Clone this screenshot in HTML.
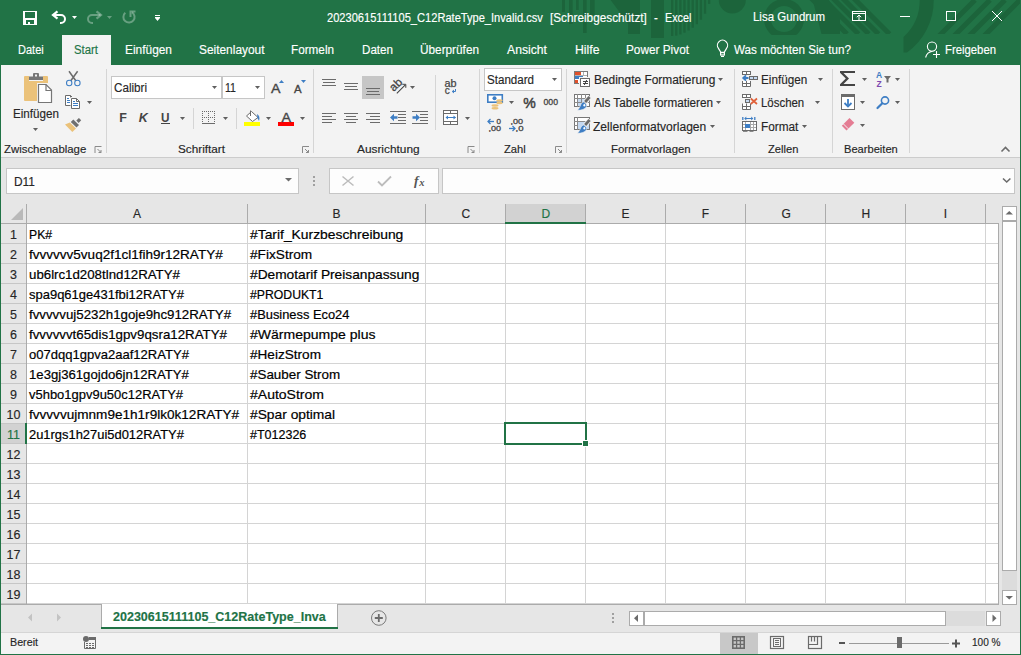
<!DOCTYPE html>
<html><head><meta charset="utf-8"><style>
html,body{margin:0;padding:0;}
body{width:1021px;height:655px;position:relative;overflow:hidden;background:#fff;font-family:"Liberation Sans",sans-serif;}

</style></head><body>
<div style="position:absolute;left:0px;top:0px;width:1021px;height:65px;background:#217346;"></div>
<svg style="position:absolute;left:0;top:0" width="1021" height="65"><g fill="#1c643b"><rect x="562" y="0" width="3" height="12"/><rect x="569" y="0" width="3.6" height="24"/><rect x="576" y="0" width="2.7" height="10"/><rect x="583" y="0" width="3.6" height="33"/><rect x="590" y="0" width="4.6" height="15"/><rect x="651" y="0" width="13" height="38"/><rect x="671.00" y="0" width="2.3" height="36.0"/><rect x="675.11" y="0" width="2.3" height="35.6"/><rect x="679.22" y="0" width="2.3" height="34.4"/><rect x="683.33" y="0" width="2.3" height="32.7"/><rect x="687.44" y="0" width="2.3" height="30.5"/><rect x="691.55" y="0" width="2.3" height="27.7"/><rect x="695.66" y="0" width="2.3" height="24.2"/><rect x="699.77" y="0" width="2.3" height="19.7"/><rect x="703.88" y="0" width="2.3" height="13.7"/><rect x="707.99" y="0" width="2.3" height="3.9"/><path d="M610.6 0 H640 V34 H628 V23.5 Z"/><path d="M718.8 0 A13.5 13.5 0 0 0 745.8 0 Z"/><clipPath id="rc"><rect x="740" y="0" width="80" height="35"/></clipPath><g clip-path="url(#rc)"><path fill-rule="evenodd" d="M764 19 A20 20 0 1 0 804 19 A20 20 0 1 0 764 19 Z M771 19 A13 13 0 1 0 797 19 A13 13 0 1 0 771 19 Z"/></g></g><path d="M812.7 0 H828.4 L840 14 V34 H821.5 Z" fill="#1c643b"/><clipPath id="tc"><rect x="0" y="0" width="1021" height="34"/></clipPath><g stroke="#1c643b" stroke-width="5" clip-path="url(#tc)"><path d="M811 -2 L847 34"/><path d="M822.5 -2 L858.5 34"/><path d="M832.7 -2 L868.7 34"/><path d="M842.5 -2 L878.5 34"/><path d="M853.5 -2 L889.5 34"/><path d="M975 0 L933 42"/><path d="M990 0 L948 42"/><path d="M1005 0 L963 42"/><path d="M1020 0 L978 42"/></g><path d="M919.7 0 H933.7 A63.7 63.7 0 0 1 907 52.5 H903.5 V37 A49.7 49.7 0 0 0 919.7 0 Z" fill="#1c643b"/></svg>
<div style="position:absolute;left:62px;top:35px;width:49px;height:30px;background:#f3f3f3;"></div>
<div style="position:absolute;left:327px;top:11.84px;font-family:'Liberation Sans',sans-serif;font-size:12px;line-height:12px;font-weight:400;color:#fff;white-space:pre;transform:scaleX(0.9241);transform-origin:0 0;-webkit-text-stroke:0.15px currentColor;">20230615111105_C12RateType_Invalid.csv</div>
<div style="position:absolute;left:549.9px;top:11.84px;font-family:'Liberation Sans',sans-serif;font-size:12px;line-height:12px;font-weight:400;color:#fff;white-space:pre;transform:scaleX(0.9806);transform-origin:0 0;-webkit-text-stroke:0.15px currentColor;">[Schreibgeschützt]</div>
<div style="position:absolute;left:654px;top:11.84px;font-family:'Liberation Sans',sans-serif;font-size:12px;line-height:12px;font-weight:400;color:#fff;white-space:pre;transform:scaleX(0.9500);transform-origin:0 0;-webkit-text-stroke:0.15px currentColor;">-</div>
<div style="position:absolute;left:664.6px;top:11.84px;font-family:'Liberation Sans',sans-serif;font-size:12px;line-height:12px;font-weight:400;color:#fff;white-space:pre;transform:scaleX(0.8997);transform-origin:0 0;-webkit-text-stroke:0.15px currentColor;">Excel</div>
<div style="position:absolute;left:753px;top:10.84px;font-family:'Liberation Sans',sans-serif;font-size:12px;line-height:12px;font-weight:400;color:#fff;white-space:pre;transform:scaleX(0.9552);transform-origin:0 0;-webkit-text-stroke:0.15px currentColor;">Lisa Gundrum</div>
<div style="position:absolute;left:17.8px;top:44.42px;font-family:'Liberation Sans',sans-serif;font-size:12.5px;line-height:12.5px;font-weight:400;color:#fff;white-space:pre;transform:scaleX(0.8805);transform-origin:0 0;-webkit-text-stroke:0.15px currentColor;">Datei</div>
<div style="position:absolute;left:125px;top:44.42px;font-family:'Liberation Sans',sans-serif;font-size:12.5px;line-height:12.5px;font-weight:400;color:#fff;white-space:pre;transform:scaleX(0.9522);transform-origin:0 0;-webkit-text-stroke:0.15px currentColor;">Einfügen</div>
<div style="position:absolute;left:198.5px;top:44.42px;font-family:'Liberation Sans',sans-serif;font-size:12.5px;line-height:12.5px;font-weight:400;color:#fff;white-space:pre;transform:scaleX(0.9519);transform-origin:0 0;-webkit-text-stroke:0.15px currentColor;">Seitenlayout</div>
<div style="position:absolute;left:291px;top:44.42px;font-family:'Liberation Sans',sans-serif;font-size:12.5px;line-height:12.5px;font-weight:400;color:#fff;white-space:pre;transform:scaleX(0.9380);transform-origin:0 0;-webkit-text-stroke:0.15px currentColor;">Formeln</div>
<div style="position:absolute;left:362px;top:44.42px;font-family:'Liberation Sans',sans-serif;font-size:12.5px;line-height:12.5px;font-weight:400;color:#fff;white-space:pre;transform:scaleX(0.9293);transform-origin:0 0;-webkit-text-stroke:0.15px currentColor;">Daten</div>
<div style="position:absolute;left:420px;top:44.42px;font-family:'Liberation Sans',sans-serif;font-size:12.5px;line-height:12.5px;font-weight:400;color:#fff;white-space:pre;transform:scaleX(0.9433);transform-origin:0 0;-webkit-text-stroke:0.15px currentColor;">Überprüfen</div>
<div style="position:absolute;left:507px;top:44.42px;font-family:'Liberation Sans',sans-serif;font-size:12.5px;line-height:12.5px;font-weight:400;color:#fff;white-space:pre;transform:scaleX(0.9756);transform-origin:0 0;-webkit-text-stroke:0.15px currentColor;">Ansicht</div>
<div style="position:absolute;left:574.5px;top:44.42px;font-family:'Liberation Sans',sans-serif;font-size:12.5px;line-height:12.5px;font-weight:400;color:#fff;white-space:pre;transform:scaleX(0.9794);transform-origin:0 0;-webkit-text-stroke:0.15px currentColor;">Hilfe</div>
<div style="position:absolute;left:626px;top:44.42px;font-family:'Liberation Sans',sans-serif;font-size:12.5px;line-height:12.5px;font-weight:400;color:#fff;white-space:pre;transform:scaleX(0.9445);transform-origin:0 0;-webkit-text-stroke:0.15px currentColor;">Power Pivot</div>
<div style="position:absolute;left:734px;top:44.42px;font-family:'Liberation Sans',sans-serif;font-size:12.5px;line-height:12.5px;font-weight:400;color:#fff;white-space:pre;transform:scaleX(0.9338);transform-origin:0 0;-webkit-text-stroke:0.15px currentColor;">Was möchten Sie tun?</div>
<div style="position:absolute;left:944.6px;top:44.42px;font-family:'Liberation Sans',sans-serif;font-size:12.5px;line-height:12.5px;font-weight:400;color:#fff;white-space:pre;transform:scaleX(0.9059);transform-origin:0 0;-webkit-text-stroke:0.15px currentColor;">Freigeben</div>
<div style="position:absolute;left:74px;top:44.42px;font-family:'Liberation Sans',sans-serif;font-size:12.5px;line-height:12.5px;font-weight:400;color:#217346;white-space:pre;transform:scaleX(0.9089);transform-origin:0 0;-webkit-text-stroke:0.15px currentColor;">Start</div>
<div style="position:absolute;left:0px;top:65px;width:1021px;height:92px;background:#f3f3f3;"></div>
<div style="position:absolute;left:0px;top:157px;width:1021px;height:1px;background:#cccccc;"></div>
<div style="position:absolute;left:106px;top:69px;width:1px;height:84px;background:#d5d5d5;"></div>
<div style="position:absolute;left:313px;top:69px;width:1px;height:84px;background:#d5d5d5;"></div>
<div style="position:absolute;left:479px;top:69px;width:1px;height:84px;background:#d5d5d5;"></div>
<div style="position:absolute;left:566px;top:69px;width:1px;height:84px;background:#d5d5d5;"></div>
<div style="position:absolute;left:734px;top:69px;width:1px;height:84px;background:#d5d5d5;"></div>
<div style="position:absolute;left:832px;top:69px;width:1px;height:84px;background:#d5d5d5;"></div>
<div style="position:absolute;left:909px;top:69px;width:1px;height:84px;background:#d5d5d5;"></div>
<div style="position:absolute;left:4px;top:143.99px;font-family:'Liberation Sans',sans-serif;font-size:11px;line-height:11px;font-weight:400;color:#262626;white-space:pre;transform:scaleX(1.0352);transform-origin:0 0;-webkit-text-stroke:0.15px currentColor;">Zwischenablage</div>
<div style="position:absolute;left:178px;top:143.99px;font-family:'Liberation Sans',sans-serif;font-size:11px;line-height:11px;font-weight:400;color:#262626;white-space:pre;transform:scaleX(1.0678);transform-origin:0 0;-webkit-text-stroke:0.15px currentColor;">Schriftart</div>
<div style="position:absolute;left:357px;top:143.99px;font-family:'Liberation Sans',sans-serif;font-size:11px;line-height:11px;font-weight:400;color:#262626;white-space:pre;transform:scaleX(1.0776);transform-origin:0 0;-webkit-text-stroke:0.15px currentColor;">Ausrichtung</div>
<div style="position:absolute;left:503.7px;top:143.99px;font-family:'Liberation Sans',sans-serif;font-size:11px;line-height:11px;font-weight:400;color:#262626;white-space:pre;transform:scaleX(1.0184);transform-origin:0 0;-webkit-text-stroke:0.15px currentColor;">Zahl</div>
<div style="position:absolute;left:610.8px;top:143.99px;font-family:'Liberation Sans',sans-serif;font-size:11px;line-height:11px;font-weight:400;color:#262626;white-space:pre;transform:scaleX(1.0344);transform-origin:0 0;-webkit-text-stroke:0.15px currentColor;">Formatvorlagen</div>
<div style="position:absolute;left:768px;top:143.99px;font-family:'Liberation Sans',sans-serif;font-size:11px;line-height:11px;font-weight:400;color:#262626;white-space:pre;transform:scaleX(1.0144);transform-origin:0 0;-webkit-text-stroke:0.15px currentColor;">Zellen</div>
<div style="position:absolute;left:843.7px;top:143.99px;font-family:'Liberation Sans',sans-serif;font-size:11px;line-height:11px;font-weight:400;color:#262626;white-space:pre;transform:scaleX(1.0109);transform-origin:0 0;-webkit-text-stroke:0.15px currentColor;">Bearbeiten</div>
<div style="position:absolute;left:12.5px;top:107.84px;font-family:'Liberation Sans',sans-serif;font-size:12px;line-height:12px;font-weight:400;color:#262626;white-space:pre;transform:scaleX(0.9710);transform-origin:0 0;-webkit-text-stroke:0.15px currentColor;">Einfügen</div>
<div style="position:absolute;left:593.5px;top:74.14px;font-family:'Liberation Sans',sans-serif;font-size:12px;line-height:12px;font-weight:400;color:#262626;white-space:pre;transform:scaleX(0.9936);transform-origin:0 0;-webkit-text-stroke:0.15px currentColor;">Bedingte Formatierung</div>
<div style="position:absolute;left:593.5px;top:97.44px;font-family:'Liberation Sans',sans-serif;font-size:12px;line-height:12px;font-weight:400;color:#262626;white-space:pre;transform:scaleX(0.9767);transform-origin:0 0;-webkit-text-stroke:0.15px currentColor;">Als Tabelle formatieren</div>
<div style="position:absolute;left:593px;top:120.64px;font-family:'Liberation Sans',sans-serif;font-size:12px;line-height:12px;font-weight:400;color:#262626;white-space:pre;transform:scaleX(1.0050);transform-origin:0 0;-webkit-text-stroke:0.15px currentColor;">Zellenformatvorlagen</div>
<div style="position:absolute;left:761.4px;top:74.14px;font-family:'Liberation Sans',sans-serif;font-size:12px;line-height:12px;font-weight:400;color:#262626;white-space:pre;transform:scaleX(0.9752);transform-origin:0 0;-webkit-text-stroke:0.15px currentColor;">Einfügen</div>
<div style="position:absolute;left:761.4px;top:97.44px;font-family:'Liberation Sans',sans-serif;font-size:12px;line-height:12px;font-weight:400;color:#262626;white-space:pre;transform:scaleX(0.9521);transform-origin:0 0;-webkit-text-stroke:0.15px currentColor;">Löschen</div>
<div style="position:absolute;left:761.4px;top:120.64px;font-family:'Liberation Sans',sans-serif;font-size:12px;line-height:12px;font-weight:400;color:#262626;white-space:pre;transform:scaleX(0.9838);transform-origin:0 0;-webkit-text-stroke:0.15px currentColor;">Format</div>
<div style="position:absolute;left:111px;top:76px;width:109px;height:21px;background:#fff;border:1px solid #c6c6c6;"></div>
<div style="position:absolute;left:222px;top:76px;width:41px;height:21px;background:#fff;border:1px solid #c6c6c6;"></div>
<div style="position:absolute;left:114.4px;top:81.84px;font-family:'Liberation Sans',sans-serif;font-size:12px;line-height:12px;font-weight:400;color:#262626;white-space:pre;transform:scaleX(0.9701);transform-origin:0 0;-webkit-text-stroke:0.15px currentColor;">Calibri</div>
<div style="position:absolute;left:225.4px;top:81.84px;font-family:'Liberation Sans',sans-serif;font-size:12px;line-height:12px;font-weight:400;color:#262626;white-space:pre;transform:scaleX(0.8822);transform-origin:0 0;-webkit-text-stroke:0.15px currentColor;">11</div>
<div style="position:absolute;left:484px;top:68px;width:76px;height:21px;background:#fff;border:1px solid #c6c6c6;"></div>
<div style="position:absolute;left:487px;top:73.84px;font-family:'Liberation Sans',sans-serif;font-size:12px;line-height:12px;font-weight:400;color:#262626;white-space:pre;transform:scaleX(0.9650);transform-origin:0 0;-webkit-text-stroke:0.15px currentColor;">Standard</div>
<div style="position:absolute;left:0px;top:158px;width:1021px;height:46px;background:#e6e6e6;"></div>
<div style="position:absolute;left:6px;top:168px;width:291px;height:24px;background:#fdfdfd;border:1px solid #c6c6c6;"></div>
<div style="position:absolute;left:13.5px;top:175.84px;font-family:'Liberation Sans',sans-serif;font-size:12px;line-height:12px;font-weight:400;color:#262626;white-space:pre;transform:scaleX(0.9941);transform-origin:0 0;-webkit-text-stroke:0.15px currentColor;">D11</div>
<div style="position:absolute;left:329px;top:168px;width:108px;height:24px;background:#fdfdfd;border:1px solid #c6c6c6;"></div>
<div style="position:absolute;left:442px;top:168px;width:571px;height:24px;background:#fdfdfd;border:1px solid #c6c6c6;"></div>
<div style="position:absolute;left:0px;top:204px;width:1021px;height:20px;background:#e6e6e6;"></div>
<div style="position:absolute;left:1px;top:224px;width:25px;height:380px;background:#e6e6e6;"></div>
<div style="position:absolute;left:27px;top:224px;width:971px;height:380px;background:#fff;"></div>
<div style="position:absolute;left:247px;top:204px;width:1px;height:19px;background:#ababab;"></div>
<div style="position:absolute;left:247px;top:224px;width:1px;height:380px;background:#d4d4d4;"></div>
<div style="position:absolute;left:425px;top:204px;width:1px;height:19px;background:#ababab;"></div>
<div style="position:absolute;left:425px;top:224px;width:1px;height:380px;background:#d4d4d4;"></div>
<div style="position:absolute;left:505px;top:204px;width:1px;height:19px;background:#ababab;"></div>
<div style="position:absolute;left:505px;top:224px;width:1px;height:380px;background:#d4d4d4;"></div>
<div style="position:absolute;left:585px;top:204px;width:1px;height:19px;background:#ababab;"></div>
<div style="position:absolute;left:585px;top:224px;width:1px;height:380px;background:#d4d4d4;"></div>
<div style="position:absolute;left:665px;top:204px;width:1px;height:19px;background:#ababab;"></div>
<div style="position:absolute;left:665px;top:224px;width:1px;height:380px;background:#d4d4d4;"></div>
<div style="position:absolute;left:745px;top:204px;width:1px;height:19px;background:#ababab;"></div>
<div style="position:absolute;left:745px;top:224px;width:1px;height:380px;background:#d4d4d4;"></div>
<div style="position:absolute;left:825px;top:204px;width:1px;height:19px;background:#ababab;"></div>
<div style="position:absolute;left:825px;top:224px;width:1px;height:380px;background:#d4d4d4;"></div>
<div style="position:absolute;left:905px;top:204px;width:1px;height:19px;background:#ababab;"></div>
<div style="position:absolute;left:905px;top:224px;width:1px;height:380px;background:#d4d4d4;"></div>
<div style="position:absolute;left:985px;top:204px;width:1px;height:19px;background:#ababab;"></div>
<div style="position:absolute;left:985px;top:224px;width:1px;height:380px;background:#d4d4d4;"></div>
<div style="position:absolute;left:26px;top:204px;width:1px;height:400px;background:#ababab;"></div>
<div style="position:absolute;left:1px;top:223px;width:997px;height:1px;background:#ababab;"></div>
<div style="position:absolute;left:27px;top:243px;width:971px;height:1px;background:#d4d4d4;"></div>
<div style="position:absolute;left:1px;top:243px;width:25px;height:1px;background:#c6c6c6;"></div>
<div style="position:absolute;left:27px;top:263px;width:971px;height:1px;background:#d4d4d4;"></div>
<div style="position:absolute;left:1px;top:263px;width:25px;height:1px;background:#c6c6c6;"></div>
<div style="position:absolute;left:27px;top:283px;width:971px;height:1px;background:#d4d4d4;"></div>
<div style="position:absolute;left:1px;top:283px;width:25px;height:1px;background:#c6c6c6;"></div>
<div style="position:absolute;left:27px;top:303px;width:971px;height:1px;background:#d4d4d4;"></div>
<div style="position:absolute;left:1px;top:303px;width:25px;height:1px;background:#c6c6c6;"></div>
<div style="position:absolute;left:27px;top:323px;width:971px;height:1px;background:#d4d4d4;"></div>
<div style="position:absolute;left:1px;top:323px;width:25px;height:1px;background:#c6c6c6;"></div>
<div style="position:absolute;left:27px;top:343px;width:971px;height:1px;background:#d4d4d4;"></div>
<div style="position:absolute;left:1px;top:343px;width:25px;height:1px;background:#c6c6c6;"></div>
<div style="position:absolute;left:27px;top:363px;width:971px;height:1px;background:#d4d4d4;"></div>
<div style="position:absolute;left:1px;top:363px;width:25px;height:1px;background:#c6c6c6;"></div>
<div style="position:absolute;left:27px;top:383px;width:971px;height:1px;background:#d4d4d4;"></div>
<div style="position:absolute;left:1px;top:383px;width:25px;height:1px;background:#c6c6c6;"></div>
<div style="position:absolute;left:27px;top:403px;width:971px;height:1px;background:#d4d4d4;"></div>
<div style="position:absolute;left:1px;top:403px;width:25px;height:1px;background:#c6c6c6;"></div>
<div style="position:absolute;left:27px;top:423px;width:971px;height:1px;background:#d4d4d4;"></div>
<div style="position:absolute;left:1px;top:423px;width:25px;height:1px;background:#c6c6c6;"></div>
<div style="position:absolute;left:27px;top:443px;width:971px;height:1px;background:#d4d4d4;"></div>
<div style="position:absolute;left:1px;top:443px;width:25px;height:1px;background:#c6c6c6;"></div>
<div style="position:absolute;left:27px;top:463px;width:971px;height:1px;background:#d4d4d4;"></div>
<div style="position:absolute;left:1px;top:463px;width:25px;height:1px;background:#c6c6c6;"></div>
<div style="position:absolute;left:27px;top:483px;width:971px;height:1px;background:#d4d4d4;"></div>
<div style="position:absolute;left:1px;top:483px;width:25px;height:1px;background:#c6c6c6;"></div>
<div style="position:absolute;left:27px;top:503px;width:971px;height:1px;background:#d4d4d4;"></div>
<div style="position:absolute;left:1px;top:503px;width:25px;height:1px;background:#c6c6c6;"></div>
<div style="position:absolute;left:27px;top:523px;width:971px;height:1px;background:#d4d4d4;"></div>
<div style="position:absolute;left:1px;top:523px;width:25px;height:1px;background:#c6c6c6;"></div>
<div style="position:absolute;left:27px;top:543px;width:971px;height:1px;background:#d4d4d4;"></div>
<div style="position:absolute;left:1px;top:543px;width:25px;height:1px;background:#c6c6c6;"></div>
<div style="position:absolute;left:27px;top:563px;width:971px;height:1px;background:#d4d4d4;"></div>
<div style="position:absolute;left:1px;top:563px;width:25px;height:1px;background:#c6c6c6;"></div>
<div style="position:absolute;left:27px;top:583px;width:971px;height:1px;background:#d4d4d4;"></div>
<div style="position:absolute;left:1px;top:583px;width:25px;height:1px;background:#c6c6c6;"></div>
<div style="position:absolute;left:27px;top:603px;width:971px;height:1px;background:#d4d4d4;"></div>
<div style="position:absolute;left:1px;top:603px;width:25px;height:1px;background:#c6c6c6;"></div>
<div style="position:absolute;left:998px;top:223px;width:1px;height:382px;background:#ababab;"></div>
<div style="position:absolute;left:1px;top:604px;width:998px;height:1px;background:#ababab;"></div>
<div style="position:absolute;left:506px;top:204px;width:79px;height:18px;background:#d2d2d2;"></div>
<div style="position:absolute;left:505px;top:222px;width:81px;height:2px;background:#217346;"></div>
<div style="position:absolute;left:1px;top:424px;width:24px;height:19px;background:#d2d2d2;"></div>
<div style="position:absolute;left:25px;top:423px;width:2px;height:21px;background:#217346;"></div>
<div style="position:absolute;left:133.0px;top:207.84px;font-family:'Liberation Sans',sans-serif;font-size:12px;line-height:12px;font-weight:400;color:#262626;white-space:pre;width:8px;text-align:center;-webkit-text-stroke:0.15px currentColor;">A</div>
<div style="position:absolute;left:332.5px;top:207.84px;font-family:'Liberation Sans',sans-serif;font-size:12px;line-height:12px;font-weight:400;color:#262626;white-space:pre;width:8px;text-align:center;-webkit-text-stroke:0.15px currentColor;">B</div>
<div style="position:absolute;left:461.5px;top:207.84px;font-family:'Liberation Sans',sans-serif;font-size:12px;line-height:12px;font-weight:400;color:#262626;white-space:pre;width:8px;text-align:center;-webkit-text-stroke:0.15px currentColor;">C</div>
<div style="position:absolute;left:541.5px;top:207.84px;font-family:'Liberation Sans',sans-serif;font-size:12px;line-height:12px;font-weight:400;color:#217346;white-space:pre;width:8px;text-align:center;-webkit-text-stroke:0.15px currentColor;">D</div>
<div style="position:absolute;left:621.5px;top:207.84px;font-family:'Liberation Sans',sans-serif;font-size:12px;line-height:12px;font-weight:400;color:#262626;white-space:pre;width:8px;text-align:center;-webkit-text-stroke:0.15px currentColor;">E</div>
<div style="position:absolute;left:701.5px;top:207.84px;font-family:'Liberation Sans',sans-serif;font-size:12px;line-height:12px;font-weight:400;color:#262626;white-space:pre;width:8px;text-align:center;-webkit-text-stroke:0.15px currentColor;">F</div>
<div style="position:absolute;left:781.5px;top:207.84px;font-family:'Liberation Sans',sans-serif;font-size:12px;line-height:12px;font-weight:400;color:#262626;white-space:pre;width:8px;text-align:center;-webkit-text-stroke:0.15px currentColor;">G</div>
<div style="position:absolute;left:861.5px;top:207.84px;font-family:'Liberation Sans',sans-serif;font-size:12px;line-height:12px;font-weight:400;color:#262626;white-space:pre;width:8px;text-align:center;-webkit-text-stroke:0.15px currentColor;">H</div>
<div style="position:absolute;left:941.5px;top:207.84px;font-family:'Liberation Sans',sans-serif;font-size:12px;line-height:12px;font-weight:400;color:#262626;white-space:pre;width:8px;text-align:center;-webkit-text-stroke:0.15px currentColor;">I</div>
<div style="position:absolute;left:0px;top:229.42px;font-family:'Liberation Sans',sans-serif;font-size:12.5px;line-height:12.5px;font-weight:400;color:#262626;white-space:pre;width:27px;text-align:center;-webkit-text-stroke:0.15px currentColor;">1</div>
<div style="position:absolute;left:0px;top:249.42px;font-family:'Liberation Sans',sans-serif;font-size:12.5px;line-height:12.5px;font-weight:400;color:#262626;white-space:pre;width:27px;text-align:center;-webkit-text-stroke:0.15px currentColor;">2</div>
<div style="position:absolute;left:0px;top:269.42px;font-family:'Liberation Sans',sans-serif;font-size:12.5px;line-height:12.5px;font-weight:400;color:#262626;white-space:pre;width:27px;text-align:center;-webkit-text-stroke:0.15px currentColor;">3</div>
<div style="position:absolute;left:0px;top:289.42px;font-family:'Liberation Sans',sans-serif;font-size:12.5px;line-height:12.5px;font-weight:400;color:#262626;white-space:pre;width:27px;text-align:center;-webkit-text-stroke:0.15px currentColor;">4</div>
<div style="position:absolute;left:0px;top:309.42px;font-family:'Liberation Sans',sans-serif;font-size:12.5px;line-height:12.5px;font-weight:400;color:#262626;white-space:pre;width:27px;text-align:center;-webkit-text-stroke:0.15px currentColor;">5</div>
<div style="position:absolute;left:0px;top:329.42px;font-family:'Liberation Sans',sans-serif;font-size:12.5px;line-height:12.5px;font-weight:400;color:#262626;white-space:pre;width:27px;text-align:center;-webkit-text-stroke:0.15px currentColor;">6</div>
<div style="position:absolute;left:0px;top:349.42px;font-family:'Liberation Sans',sans-serif;font-size:12.5px;line-height:12.5px;font-weight:400;color:#262626;white-space:pre;width:27px;text-align:center;-webkit-text-stroke:0.15px currentColor;">7</div>
<div style="position:absolute;left:0px;top:369.42px;font-family:'Liberation Sans',sans-serif;font-size:12.5px;line-height:12.5px;font-weight:400;color:#262626;white-space:pre;width:27px;text-align:center;-webkit-text-stroke:0.15px currentColor;">8</div>
<div style="position:absolute;left:0px;top:389.42px;font-family:'Liberation Sans',sans-serif;font-size:12.5px;line-height:12.5px;font-weight:400;color:#262626;white-space:pre;width:27px;text-align:center;-webkit-text-stroke:0.15px currentColor;">9</div>
<div style="position:absolute;left:0px;top:409.42px;font-family:'Liberation Sans',sans-serif;font-size:12.5px;line-height:12.5px;font-weight:400;color:#262626;white-space:pre;width:27px;text-align:center;-webkit-text-stroke:0.15px currentColor;">10</div>
<div style="position:absolute;left:0px;top:429.42px;font-family:'Liberation Sans',sans-serif;font-size:12.5px;line-height:12.5px;font-weight:400;color:#217346;white-space:pre;width:27px;text-align:center;-webkit-text-stroke:0.15px currentColor;">11</div>
<div style="position:absolute;left:0px;top:449.42px;font-family:'Liberation Sans',sans-serif;font-size:12.5px;line-height:12.5px;font-weight:400;color:#262626;white-space:pre;width:27px;text-align:center;-webkit-text-stroke:0.15px currentColor;">12</div>
<div style="position:absolute;left:0px;top:469.42px;font-family:'Liberation Sans',sans-serif;font-size:12.5px;line-height:12.5px;font-weight:400;color:#262626;white-space:pre;width:27px;text-align:center;-webkit-text-stroke:0.15px currentColor;">13</div>
<div style="position:absolute;left:0px;top:489.42px;font-family:'Liberation Sans',sans-serif;font-size:12.5px;line-height:12.5px;font-weight:400;color:#262626;white-space:pre;width:27px;text-align:center;-webkit-text-stroke:0.15px currentColor;">14</div>
<div style="position:absolute;left:0px;top:509.42px;font-family:'Liberation Sans',sans-serif;font-size:12.5px;line-height:12.5px;font-weight:400;color:#262626;white-space:pre;width:27px;text-align:center;-webkit-text-stroke:0.15px currentColor;">15</div>
<div style="position:absolute;left:0px;top:529.42px;font-family:'Liberation Sans',sans-serif;font-size:12.5px;line-height:12.5px;font-weight:400;color:#262626;white-space:pre;width:27px;text-align:center;-webkit-text-stroke:0.15px currentColor;">16</div>
<div style="position:absolute;left:0px;top:549.42px;font-family:'Liberation Sans',sans-serif;font-size:12.5px;line-height:12.5px;font-weight:400;color:#262626;white-space:pre;width:27px;text-align:center;-webkit-text-stroke:0.15px currentColor;">17</div>
<div style="position:absolute;left:0px;top:569.42px;font-family:'Liberation Sans',sans-serif;font-size:12.5px;line-height:12.5px;font-weight:400;color:#262626;white-space:pre;width:27px;text-align:center;-webkit-text-stroke:0.15px currentColor;">18</div>
<div style="position:absolute;left:0px;top:589.42px;font-family:'Liberation Sans',sans-serif;font-size:12.5px;line-height:12.5px;font-weight:400;color:#262626;white-space:pre;width:27px;text-align:center;-webkit-text-stroke:0.15px currentColor;">19</div>
<div style="position:absolute;left:29.4px;top:228.00px;font-family:'Liberation Sans',sans-serif;font-size:13px;line-height:13px;font-weight:400;color:#000;white-space:pre;transform:scaleX(0.9399);transform-origin:0 0;-webkit-text-stroke:0.2px #000;">PK#</div>
<div style="position:absolute;left:249.8px;top:228.00px;font-family:'Liberation Sans',sans-serif;font-size:13px;line-height:13px;font-weight:400;color:#000;white-space:pre;transform:scaleX(1.0660);transform-origin:0 0;-webkit-text-stroke:0.2px #000;">#Tarif_Kurzbeschreibung</div>
<div style="position:absolute;left:29.4px;top:248.00px;font-family:'Liberation Sans',sans-serif;font-size:13px;line-height:13px;font-weight:400;color:#000;white-space:pre;transform:scaleX(1.0403);transform-origin:0 0;-webkit-text-stroke:0.2px #000;">fvvvvvv5vuq2f1cl1fih9r12RATY#</div>
<div style="position:absolute;left:249.8px;top:248.00px;font-family:'Liberation Sans',sans-serif;font-size:13px;line-height:13px;font-weight:400;color:#000;white-space:pre;transform:scaleX(1.0501);transform-origin:0 0;-webkit-text-stroke:0.2px #000;">#FixStrom</div>
<div style="position:absolute;left:29.4px;top:268.00px;font-family:'Liberation Sans',sans-serif;font-size:13px;line-height:13px;font-weight:400;color:#000;white-space:pre;transform:scaleX(1.0201);transform-origin:0 0;-webkit-text-stroke:0.2px #000;">ub6lrc1d208tlnd12RATY#</div>
<div style="position:absolute;left:249.8px;top:268.00px;font-family:'Liberation Sans',sans-serif;font-size:13px;line-height:13px;font-weight:400;color:#000;white-space:pre;transform:scaleX(1.0553);transform-origin:0 0;-webkit-text-stroke:0.2px #000;">#Demotarif Preisanpassung</div>
<div style="position:absolute;left:29.4px;top:288.00px;font-family:'Liberation Sans',sans-serif;font-size:13px;line-height:13px;font-weight:400;color:#000;white-space:pre;transform:scaleX(0.9983);transform-origin:0 0;-webkit-text-stroke:0.2px #000;">spa9q61ge431fbi12RATY#</div>
<div style="position:absolute;left:249.8px;top:288.00px;font-family:'Liberation Sans',sans-serif;font-size:13px;line-height:13px;font-weight:400;color:#000;white-space:pre;transform:scaleX(0.9406);transform-origin:0 0;-webkit-text-stroke:0.2px #000;">#PRODUKT1</div>
<div style="position:absolute;left:29.4px;top:308.00px;font-family:'Liberation Sans',sans-serif;font-size:13px;line-height:13px;font-weight:400;color:#000;white-space:pre;transform:scaleX(1.0218);transform-origin:0 0;-webkit-text-stroke:0.2px #000;">fvvvvvuj5232h1goje9hc912RATY#</div>
<div style="position:absolute;left:249.8px;top:308.00px;font-family:'Liberation Sans',sans-serif;font-size:13px;line-height:13px;font-weight:400;color:#000;white-space:pre;transform:scaleX(0.9895);transform-origin:0 0;-webkit-text-stroke:0.2px #000;">#Business Eco24</div>
<div style="position:absolute;left:29.4px;top:328.00px;font-family:'Liberation Sans',sans-serif;font-size:13px;line-height:13px;font-weight:400;color:#000;white-space:pre;transform:scaleX(1.0237);transform-origin:0 0;-webkit-text-stroke:0.2px #000;">fvvvvvvt65dis1gpv9qsra12RATY#</div>
<div style="position:absolute;left:249.8px;top:328.00px;font-family:'Liberation Sans',sans-serif;font-size:13px;line-height:13px;font-weight:400;color:#000;white-space:pre;transform:scaleX(1.0788);transform-origin:0 0;-webkit-text-stroke:0.2px #000;">#Wärmepumpe plus</div>
<div style="position:absolute;left:29.4px;top:348.00px;font-family:'Liberation Sans',sans-serif;font-size:13px;line-height:13px;font-weight:400;color:#000;white-space:pre;transform:scaleX(1.0025);transform-origin:0 0;-webkit-text-stroke:0.2px #000;">o07dqq1gpva2aaf12RATY#</div>
<div style="position:absolute;left:249.8px;top:348.00px;font-family:'Liberation Sans',sans-serif;font-size:13px;line-height:13px;font-weight:400;color:#000;white-space:pre;transform:scaleX(1.0453);transform-origin:0 0;-webkit-text-stroke:0.2px #000;">#HeizStrom</div>
<div style="position:absolute;left:29.4px;top:368.00px;font-family:'Liberation Sans',sans-serif;font-size:13px;line-height:13px;font-weight:400;color:#000;white-space:pre;transform:scaleX(1.0116);transform-origin:0 0;-webkit-text-stroke:0.2px #000;">1e3gj361gojdo6jn12RATY#</div>
<div style="position:absolute;left:249.8px;top:368.00px;font-family:'Liberation Sans',sans-serif;font-size:13px;line-height:13px;font-weight:400;color:#000;white-space:pre;transform:scaleX(1.0316);transform-origin:0 0;-webkit-text-stroke:0.2px #000;">#Sauber Strom</div>
<div style="position:absolute;left:29.4px;top:388.00px;font-family:'Liberation Sans',sans-serif;font-size:13px;line-height:13px;font-weight:400;color:#000;white-space:pre;transform:scaleX(0.9972);transform-origin:0 0;-webkit-text-stroke:0.2px #000;">v5hbo1gpv9u50c12RATY#</div>
<div style="position:absolute;left:249.8px;top:388.00px;font-family:'Liberation Sans',sans-serif;font-size:13px;line-height:13px;font-weight:400;color:#000;white-space:pre;transform:scaleX(1.0778);transform-origin:0 0;-webkit-text-stroke:0.2px #000;">#AutoStrom</div>
<div style="position:absolute;left:29.4px;top:408.00px;font-family:'Liberation Sans',sans-serif;font-size:13px;line-height:13px;font-weight:400;color:#000;white-space:pre;transform:scaleX(1.0435);transform-origin:0 0;-webkit-text-stroke:0.2px #000;">fvvvvvujmnm9e1h1r9lk0k12RATY#</div>
<div style="position:absolute;left:249.8px;top:408.00px;font-family:'Liberation Sans',sans-serif;font-size:13px;line-height:13px;font-weight:400;color:#000;white-space:pre;transform:scaleX(1.0608);transform-origin:0 0;-webkit-text-stroke:0.2px #000;">#Spar optimal</div>
<div style="position:absolute;left:29.4px;top:428.00px;font-family:'Liberation Sans',sans-serif;font-size:13px;line-height:13px;font-weight:400;color:#000;white-space:pre;transform:scaleX(0.9937);transform-origin:0 0;-webkit-text-stroke:0.2px #000;">2u1rgs1h27ui5d012RATY#</div>
<div style="position:absolute;left:249.8px;top:428.00px;font-family:'Liberation Sans',sans-serif;font-size:13px;line-height:13px;font-weight:400;color:#000;white-space:pre;transform:scaleX(0.9614);transform-origin:0 0;-webkit-text-stroke:0.2px #000;">#T012326</div>
<div style="position:absolute;left:504px;top:422px;width:79px;height:19px;border:2px solid #217346;"></div>
<div style="position:absolute;left:582px;top:440px;width:7px;height:7px;background:#fff;"></div>
<div style="position:absolute;left:583px;top:441px;width:5px;height:5px;background:#217346;"></div>
<div style="position:absolute;left:999px;top:204px;width:21px;height:401px;background:#e6e6e6;"></div>
<div style="position:absolute;left:1002px;top:206px;width:15px;height:384px;background:#dcdcdc;"></div>
<div style="position:absolute;left:1002px;top:206px;width:13px;height:13px;background:#fff;border:1px solid #ababab;"></div>
<div style="position:absolute;left:1002px;top:221px;width:13px;height:348px;background:#fff;border:1px solid #ababab;"></div>
<div style="position:absolute;left:1002px;top:590px;width:13px;height:13px;background:#fff;border:1px solid #ababab;"></div>
<div style="position:absolute;left:0px;top:605px;width:1021px;height:27px;background:#e6e6e6;"></div>
<div style="position:absolute;left:101px;top:604px;width:237px;height:25px;background:#fff;"></div>
<div style="position:absolute;left:101px;top:604px;width:1px;height:25px;background:#ababab;"></div>
<div style="position:absolute;left:337px;top:604px;width:1px;height:25px;background:#ababab;"></div>
<div style="position:absolute;left:101px;top:627px;width:237px;height:2px;background:#217346;"></div>
<div style="position:absolute;left:113px;top:611.42px;font-family:'Liberation Sans',sans-serif;font-size:12.5px;line-height:12.5px;font-weight:700;color:#217346;white-space:pre;transform:scaleX(1.0012);transform-origin:0 0;-webkit-text-stroke:0.15px currentColor;">20230615111105_C12RateType_Inva</div>
<div style="position:absolute;left:629px;top:611px;width:13px;height:13px;background:#fff;border:1px solid #ababab;"></div>
<div style="position:absolute;left:644px;top:611px;width:341px;height:15px;background:#dcdcdc;"></div>
<div style="position:absolute;left:644px;top:611px;width:300px;height:13px;background:#fff;border:1px solid #ababab;"></div>
<div style="position:absolute;left:986px;top:611px;width:13px;height:13px;background:#fff;border:1px solid #ababab;"></div>
<div style="position:absolute;left:0px;top:632px;width:1021px;height:1px;background:#d5d5d5;"></div>
<div style="position:absolute;left:0px;top:633px;width:1021px;height:21px;background:#f3f3f3;"></div>
<div style="position:absolute;left:720px;top:633px;width:38px;height:21px;background:#c8c8c8;"></div>
<div style="position:absolute;left:9.6px;top:636.89px;font-family:'Liberation Sans',sans-serif;font-size:11px;line-height:11px;font-weight:400;color:#262626;white-space:pre;transform:scaleX(0.9739);transform-origin:0 0;-webkit-text-stroke:0.15px currentColor;">Bereit</div>
<div style="position:absolute;left:972px;top:636.89px;font-family:'Liberation Sans',sans-serif;font-size:11px;line-height:11px;font-weight:400;color:#262626;white-space:pre;transform:scaleX(0.9166);transform-origin:0 0;-webkit-text-stroke:0.15px currentColor;">100 %</div>
<div style="position:absolute;left:0px;top:0px;width:1px;height:655px;background:#217346;"></div>
<div style="position:absolute;left:1020px;top:0px;width:1px;height:655px;background:#217346;"></div>
<div style="position:absolute;left:0px;top:654px;width:1021px;height:1px;background:#217346;"></div>
<svg style="position:absolute;left:0;top:0" width="1021" height="655"><rect x="23" y="11" width="14" height="14" fill="#ffffff"/><rect x="25" y="12" width="10" height="6" fill="#217346"/><rect x="26" y="20" width="8" height="4" fill="#217346"/><rect x="28" y="22" width="2" height="2" fill="#ffffff"/><path d="M57.5 11.3 L53 15 L57.5 18.7" fill="none" stroke="#ffffff" stroke-width="2.2"/><path d="M53.5 15 H61 A4 4 0 0 1 61 23 H60" fill="none" stroke="#ffffff" stroke-width="2"/><path d="M72 16 h5 l-2.5 3 z" fill="#ffffff"/><path d="M96.5 11.3 L101 15 L96.5 18.7" fill="none" stroke="rgba(255,255,255,0.32)" stroke-width="2.2"/><path d="M100.5 15 H92 A4 4 0 0 0 92 23 H93" fill="none" stroke="rgba(255,255,255,0.32)" stroke-width="2"/><path d="M107 16 h5 l-2.5 3 z" fill="rgba(255,255,255,0.32)"/><path d="M132 12.3 A5.6 5.6 0 1 1 125.3 12.8" fill="none" stroke="rgba(255,255,255,0.32)" stroke-width="2"/><path d="M130.5 10.5 V17 M129.5 11.5 H135.5" fill="none" stroke="rgba(255,255,255,0.32)" stroke-width="2"/><rect x="155" y="15" width="5" height="1" fill="#ffffff"/><rect x="155" y="17" width="5" height="1" fill="#ffffff"/><path d="M155 18 h5 l-2.5 3 z" fill="#ffffff"/><path d="M25 76 H29 V81 H43 V76 H47 A1 1 0 0 1 48 77 V100 A1 1 0 0 1 47 101 H25 A1 1 0 0 1 24 100 V77 A1 1 0 0 1 25 76 Z" fill="#ebc27a"/><path d="M29 76.5 H33 V74 A1 1 0 0 1 34 73 H38 A1 1 0 0 1 39 74 V76.5 H43 V80 H29 Z" fill="#767676"/><rect x="35" y="74.5" width="2" height="2" fill="#f3f3f3"/><rect x="37" y="83" width="16" height="21" fill="#f3f3f3"/><path d="M38.5 84.5 H46 L51.5 90 V102.5 H38.5 Z" fill="#fff" stroke="#767676" stroke-width="1.2"/><path d="M46 84.5 V90.5 H51.5" fill="none" stroke="#767676" stroke-width="1.2"/><path d="M33 128 h5 l-2.5 3 z" fill="#5f5f5f"/><path d="M69 71.3 L75.8 80.8 M77.6 71.3 L70.8 80.8" stroke="#6b6b6b" stroke-width="1.5"/><circle cx="69.2" cy="83" r="2.7" fill="none" stroke="#3e7ec4" stroke-width="1.05"/><circle cx="77.4" cy="83" r="2.7" fill="none" stroke="#3e7ec4" stroke-width="1.05"/><path d="M65.5 95.5 H70.5 L72.5 97.5 V105.5 H65.5 Z" fill="#fff" stroke="#6b6b6b" stroke-width="1"/><path d="M70.5 95.5 V97.5 H72.5" fill="none" stroke="#6b6b6b" stroke-width="1"/><rect x="67" y="98" width="2" height="1" fill="#3e7ec4"/><rect x="67" y="100" width="3" height="1" fill="#3e7ec4"/><rect x="67" y="102" width="3" height="1" fill="#3e7ec4"/><rect x="70.5" y="97" width="10.5" height="12.5" fill="#f3f3f3"/><path d="M71.5 98.5 H76.5 L79.5 101.5 V108.5 H71.5 Z" fill="#fff" stroke="#6b6b6b" stroke-width="1"/><path d="M76.5 98.5 V101.5 H79.5" fill="none" stroke="#6b6b6b" stroke-width="1"/><rect x="73" y="101" width="2" height="1" fill="#3e7ec4"/><rect x="73" y="103" width="5" height="1" fill="#3e7ec4"/><rect x="73" y="105" width="5" height="1" fill="#3e7ec4"/><path d="M87 101 h5 l-2.5 3 z" fill="#5f5f5f"/><path d="M76.3 120.6 L78.9 118 L81.2 120.3 L78.6 122.9 Z" fill="#707070"/><path d="M70.8 121.9 L73.3 119.4 L79 125.1 L76.5 127.6 Z" fill="#707070"/><path d="M65 124.4 L69.8 122.4 L76 128.4 L72.3 132 Z" fill="#ebc27a"/><path d="M212 86 h5 l-2.5 3 z" fill="#5f5f5f"/><path d="M255 86 h5 l-2.5 3 z" fill="#5f5f5f"/><path d="M279 83 h5 l-2.5 -3 z" fill="#3e7ec4"/><path d="M301 80 h5 l-2.5 3 z" fill="#3e7ec4"/><path d="M180 117 h5 l-2.5 3 z" fill="#5f5f5f"/><rect x="202" y="111" width="1" height="1" fill="#6b6b6b"/><rect x="202" y="113" width="1" height="1" fill="#6b6b6b"/><rect x="202" y="115" width="1" height="1" fill="#6b6b6b"/><rect x="202" y="117" width="1" height="1" fill="#6b6b6b"/><rect x="202" y="119" width="1" height="1" fill="#6b6b6b"/><rect x="202" y="121" width="1" height="1" fill="#6b6b6b"/><rect x="202" y="123" width="1" height="1" fill="#6b6b6b"/><rect x="204" y="111" width="1" height="1" fill="#6b6b6b"/><rect x="204" y="117" width="1" height="1" fill="#6b6b6b"/><rect x="204" y="123" width="1" height="1" fill="#6b6b6b"/><rect x="206" y="111" width="1" height="1" fill="#6b6b6b"/><rect x="206" y="117" width="1" height="1" fill="#6b6b6b"/><rect x="206" y="123" width="1" height="1" fill="#6b6b6b"/><rect x="208" y="111" width="1" height="1" fill="#6b6b6b"/><rect x="208" y="113" width="1" height="1" fill="#6b6b6b"/><rect x="208" y="115" width="1" height="1" fill="#6b6b6b"/><rect x="208" y="117" width="1" height="1" fill="#6b6b6b"/><rect x="208" y="119" width="1" height="1" fill="#6b6b6b"/><rect x="208" y="121" width="1" height="1" fill="#6b6b6b"/><rect x="208" y="123" width="1" height="1" fill="#6b6b6b"/><rect x="210" y="111" width="1" height="1" fill="#6b6b6b"/><rect x="210" y="117" width="1" height="1" fill="#6b6b6b"/><rect x="210" y="123" width="1" height="1" fill="#6b6b6b"/><rect x="212" y="111" width="1" height="1" fill="#6b6b6b"/><rect x="212" y="117" width="1" height="1" fill="#6b6b6b"/><rect x="212" y="123" width="1" height="1" fill="#6b6b6b"/><rect x="214" y="111" width="1" height="1" fill="#6b6b6b"/><rect x="214" y="113" width="1" height="1" fill="#6b6b6b"/><rect x="214" y="115" width="1" height="1" fill="#6b6b6b"/><rect x="214" y="117" width="1" height="1" fill="#6b6b6b"/><rect x="214" y="119" width="1" height="1" fill="#6b6b6b"/><rect x="214" y="121" width="1" height="1" fill="#6b6b6b"/><rect x="214" y="123" width="1" height="1" fill="#6b6b6b"/><rect x="202" y="123" width="13" height="1" fill="#6b6b6b"/><path d="M223 117 h5 l-2.5 3 z" fill="#5f5f5f"/><rect x="236" y="108" width="1" height="21" fill="#d5d5d5"/><rect x="193" y="108" width="1" height="21" fill="#d5d5d5"/><path d="M251.5 111.5 L258 117.5 L252.5 121.5 L246.5 116 Z" fill="#fff" stroke="#6b6b6b" stroke-width="1"/><path d="M250.5 110.5 V116" stroke="#6b6b6b" stroke-width="1"/><path d="M257 114 Q260.5 116 259 121 L257.5 118 Z" fill="#3e7ec4"/><rect x="244" y="122" width="16" height="4" fill="#ffff00"/><path d="M266 117 h5 l-2.5 3 z" fill="#5f5f5f"/><rect x="278" y="122" width="16" height="4" fill="#ff0000"/><path d="M300 117 h5 l-2.5 3 z" fill="#5f5f5f"/><path d="M95.0 153 V146.5 H101.5" fill="none" stroke="#8a8a8a" stroke-width="1"/><path d="M97.5 149 L101.0 152.5 M101.0 150 V152.5 H98.5" fill="none" stroke="#8a8a8a" stroke-width="1"/><path d="M302.5 153 V146.5 H309" fill="none" stroke="#8a8a8a" stroke-width="1"/><path d="M305 149 L308.5 152.5 M308.5 150 V152.5 H306" fill="none" stroke="#8a8a8a" stroke-width="1"/><path d="M468.0 153 V146.5 H474.5" fill="none" stroke="#8a8a8a" stroke-width="1"/><path d="M470.5 149 L474.0 152.5 M474.0 150 V152.5 H471.5" fill="none" stroke="#8a8a8a" stroke-width="1"/><path d="M555.5 153 V146.5 H562" fill="none" stroke="#8a8a8a" stroke-width="1"/><path d="M558 149 L561.5 152.5 M561.5 150 V152.5 H559" fill="none" stroke="#8a8a8a" stroke-width="1"/><rect x="322" y="79" width="14" height="1" fill="#6b6b6b"/><rect x="323" y="82" width="12" height="1" fill="#6b6b6b"/><rect x="322" y="85" width="14" height="1" fill="#6b6b6b"/><rect x="344" y="83" width="14" height="1" fill="#6b6b6b"/><rect x="345" y="86" width="12" height="1" fill="#6b6b6b"/><rect x="344" y="89" width="14" height="1" fill="#6b6b6b"/><rect x="362" y="76" width="22" height="23" fill="#c6c6c6"/><rect x="366" y="88" width="14" height="1" fill="#6b6b6b"/><rect x="367" y="91" width="12" height="1" fill="#6b6b6b"/><rect x="366" y="94" width="14" height="1" fill="#6b6b6b"/><rect x="322" y="113" width="14" height="1" fill="#6b6b6b"/><rect x="322" y="116" width="10" height="1" fill="#6b6b6b"/><rect x="322" y="119" width="14" height="1" fill="#6b6b6b"/><rect x="322" y="122" width="10" height="1" fill="#6b6b6b"/><rect x="344" y="113" width="14" height="1" fill="#6b6b6b"/><rect x="346" y="116" width="10" height="1" fill="#6b6b6b"/><rect x="344" y="119" width="14" height="1" fill="#6b6b6b"/><rect x="346" y="122" width="10" height="1" fill="#6b6b6b"/><rect x="366" y="113" width="14" height="1" fill="#6b6b6b"/><rect x="370" y="116" width="10" height="1" fill="#6b6b6b"/><rect x="366" y="119" width="14" height="1" fill="#6b6b6b"/><rect x="370" y="122" width="10" height="1" fill="#6b6b6b"/><rect x="390" y="111" width="16" height="1" fill="#6b6b6b"/><rect x="398" y="114" width="8" height="1" fill="#6b6b6b"/><rect x="398" y="117" width="8" height="1" fill="#6b6b6b"/><rect x="398" y="120" width="8" height="1" fill="#6b6b6b"/><rect x="390" y="123" width="16" height="1" fill="#6b6b6b"/><rect x="412" y="111" width="16" height="1" fill="#6b6b6b"/><rect x="420" y="114" width="8" height="1" fill="#6b6b6b"/><rect x="420" y="117" width="8" height="1" fill="#6b6b6b"/><rect x="420" y="120" width="8" height="1" fill="#6b6b6b"/><rect x="412" y="123" width="16" height="1" fill="#6b6b6b"/><path d="M390 117.5 L394 113.8 V116.3 H397.5 V118.7 H394 V121.2 Z" fill="#3e7ec4"/><path d="M420 117.5 L416 113.8 V116.3 H412.5 V118.7 H416 V121.2 Z" fill="#3e7ec4"/><text x="0" y="0" transform="translate(393.8 92) rotate(-45)" font-family="Liberation Sans" font-size="11.5" fill="#444444" stroke="#444444" stroke-width="0.3" textLength="13" lengthAdjust="spacingAndGlyphs">ab</text><path d="M396.8 93.3 L405.3 84.8" fill="none" stroke="#444444" stroke-width="1.1"/><path d="M402.3 84.3 H405.8 V87.8" fill="none" stroke="#444444" stroke-width="1"/><path d="M410 86 h5 l-2.5 3 z" fill="#5f5f5f"/><rect x="435" y="75" width="1" height="55" fill="#d5d5d5"/><text x="444.5" y="86.5" font-family="Liberation Sans" font-size="10" fill="#444444" stroke="#444444" stroke-width="0.25" textLength="12" lengthAdjust="spacingAndGlyphs">ab</text><text x="444.8" y="94" font-family="Liberation Sans" font-size="10" fill="#444444" stroke="#444444" stroke-width="0.25">c</text><path d="M455.5 89 V91.5 H452.5 M454 90 L452.2 91.5 L454 93" fill="none" stroke="#3e7ec4" stroke-width="1"/><rect x="443.5" y="110.5" width="14" height="14" fill="#fff" stroke="#6b6b6b" stroke-width="1"/><path d="M443.5 113.5 H457.5 M443.5 121.5 H457.5 M450.5 110.5 V113.5 M450.5 121.5 V124.5" stroke="#6b6b6b" stroke-width="1"/><path d="M446 117.5 H455.5" stroke="#3e7ec4" stroke-width="1"/><path d="M445.5 117.5 L448 115.5 V119.5 Z M456 117.5 L453.5 115.5 V119.5 Z" fill="#3e7ec4"/><path d="M465 117 h5 l-2.5 3 z" fill="#5f5f5f"/><path d="M552 78 h5 l-2.5 3 z" fill="#5f5f5f"/><rect x="487.8" y="94.8" width="14.5" height="7.4" fill="#fff" stroke="#3e7ec4" stroke-width="1.6"/><circle cx="494.5" cy="98.3" r="2" fill="#3e7ec4"/><ellipse cx="499.5" cy="100.5" rx="3.2" ry="1.2" fill="#ebc27a"/><ellipse cx="499.5" cy="103" rx="3.2" ry="1.2" fill="#ebc27a"/><ellipse cx="495" cy="105.5" rx="3.5" ry="1.2" fill="#ebc27a"/><ellipse cx="495" cy="108.3" rx="3.5" ry="1.2" fill="#ebc27a"/><path d="M509 101 h5 l-2.5 3 z" fill="#5f5f5f"/><text x="523.3" y="108" font-family="Liberation Sans" font-size="14.5" fill="#444444" stroke="#444444" stroke-width="0.5" textLength="12.5" lengthAdjust="spacingAndGlyphs">%</text><text x="543.5" y="105" font-family="Liberation Sans" font-size="9.5" fill="#444444" stroke="#444444" stroke-width="0.35" textLength="14.5" lengthAdjust="spacingAndGlyphs">000</text><text x="496.5" y="123.5" font-family="Liberation Sans" font-size="8" fill="#444444" stroke="#444444" stroke-width="0.3">0</text><text x="488.5" y="131.3" font-family="Liberation Sans" font-size="8" fill="#444444" stroke="#444444" stroke-width="0.3" textLength="12.5" lengthAdjust="spacingAndGlyphs">,00</text><path d="M488 121.5 H494" stroke="#3e7ec4" stroke-width="1.3"/><path d="M490.5 119 L488 121.5 L490.5 124" fill="none" stroke="#3e7ec4" stroke-width="1.3"/><text x="510.5" y="123.5" font-family="Liberation Sans" font-size="8" fill="#444444" stroke="#444444" stroke-width="0.3" textLength="12.5" lengthAdjust="spacingAndGlyphs">,00</text><text x="515.5" y="131.3" font-family="Liberation Sans" font-size="8" fill="#444444" stroke="#444444" stroke-width="0.3" textLength="8" lengthAdjust="spacingAndGlyphs">,0</text><path d="M509 128.5 H515" stroke="#3e7ec4" stroke-width="1.3"/><path d="M512.5 126 L515 128.5 L512.5 131" fill="none" stroke="#3e7ec4" stroke-width="1.3"/><rect x="574.5" y="71.5" width="13" height="12" fill="#fff" stroke="#7a7a7a" stroke-width="1"/><rect x="575" y="72" width="6" height="3" fill="#e0502a"/><rect x="575" y="76" width="8" height="3" fill="#3e7ec4"/><rect x="575" y="80" width="3" height="3" fill="#e0502a"/><path d="M583.5 72 V75 M575 75.5 H587" stroke="#b0b0b0" stroke-width="1"/><rect x="579" y="77" width="12" height="11" fill="#f3f3f3"/><rect x="580.5" y="78.5" width="9" height="8" fill="#fff" stroke="#6b6b6b" stroke-width="1"/><path d="M583 81.5 H588 M583 83.5 H588 M586.7 80 L584.3 85" stroke="#444444" stroke-width="1"/><rect x="574.5" y="94.5" width="15" height="12" fill="#fff" stroke="#777" stroke-width="1"/><rect x="578" y="99" width="8" height="7" fill="#c5d9f1"/><path d="M577.5 94 V107 M581.5 94 V107 M585.5 94 V107 M574 98.5 H590 M574 102.5 H590" stroke="#8a8a8a" stroke-width="1"/><path d="M588.3 95 L591.5 98.2 L586.5 104 L583.3 100.8 Z" fill="#f3f3f3"/><path d="M588.5 96 L590.6 98.1 L586.2 103 L584.1 100.9 Z" fill="#6b6b6b"/><path d="M583.5 102 Q587.5 103.5 586.3 107 Q584 110.3 577.5 110.3 Q580 107.5 580.6 105 Q581.3 102.5 583.5 102 Z" fill="#3e7ec4" stroke="#f3f3f3" stroke-width="0.6"/><ellipse cx="584.3" cy="105.3" rx="0.9" ry="1.2" fill="#fff"/><rect x="574.5" y="117.5" width="15" height="12" fill="#fff" stroke="#777" stroke-width="1"/><rect x="578" y="122" width="11" height="7" fill="#c5d9f1"/><path d="M577.5 117 V130 M574 121.5 H590 M574 125.5 H578" stroke="#8a8a8a" stroke-width="1"/><path d="M588.3 118 L591.5 121.2 L586.5 127 L583.3 123.8 Z" fill="#f3f3f3"/><path d="M588.5 119 L590.6 121.1 L586.2 126 L584.1 123.9 Z" fill="#6b6b6b"/><path d="M583.5 125 Q587.5 126.5 586.3 130 Q584 133.3 577.5 133.3 Q580 130.5 580.6 128 Q581.3 125.5 583.5 125 Z" fill="#3e7ec4" stroke="#f3f3f3" stroke-width="0.6"/><ellipse cx="584.3" cy="128.3" rx="0.9" ry="1.2" fill="#fff"/><path d="M718 78 h5 l-2.5 3 z" fill="#5f5f5f"/><path d="M716 101 h5 l-2.5 3 z" fill="#5f5f5f"/><path d="M710 125 h5 l-2.5 3 z" fill="#5f5f5f"/><rect x="742.5" y="71.5" width="8" height="3" fill="#fff" stroke="#6b6b6b" stroke-width="1"/><path d="M746.5 71 V75" stroke="#6b6b6b" stroke-width="1"/><rect x="749.5" y="76.5" width="8" height="3" fill="#c5d9f1" stroke="#6b6b6b" stroke-width="1"/><path d="M753.5 76 V80" stroke="#6b6b6b" stroke-width="1"/><path d="M742.5 81 V86.5 H750.5 V81 M742.5 83.5 H750.5 M746.5 81 V86.5" fill="#fff" stroke="#6b6b6b" stroke-width="1"/><path d="M748.5 78 H743.8" stroke="#3e7ec4" stroke-width="2"/><path d="M746 75.3 L743.2 78 L746 80.7" fill="none" stroke="#3e7ec4" stroke-width="1.8"/><rect x="742.5" y="94.5" width="8" height="3" fill="#fff" stroke="#6b6b6b" stroke-width="1"/><path d="M746.5 94 V98" stroke="#6b6b6b" stroke-width="1"/><rect x="745.5" y="99.5" width="4" height="3" fill="#c5d9f1" stroke="#6b6b6b" stroke-width="1"/><path d="M742.5 103.5 V109.5 H750.5 V103.5 M742.5 106.5 H750.5 M746.5 103.5 V109.5" fill="#fff" stroke="#6b6b6b" stroke-width="1"/><path d="M750.8 98.5 L757 104 M757 98.5 L750.8 104" stroke="#e0613a" stroke-width="1.7"/><path d="M742.8 117 V120 M754.8 117 V120" stroke="#3e7ec4" stroke-width="1.3"/><path d="M745 118.5 H752.5" stroke="#3e7ec4" stroke-width="1"/><path d="M744.2 118.5 L746.3 116.6 V120.4 Z M753.3 118.5 L751.2 116.6 V120.4 Z" fill="#3e7ec4"/><rect x="742.5" y="121.5" width="14" height="9" fill="#fff" stroke="#6b6b6b" stroke-width="1"/><path d="M745.5 122 V130 M750.5 122 V130 M753.5 122 V130 M743 124.5 H756 M743 127.5 H756" stroke="#a8a8a8" stroke-width="1"/><rect x="745" y="124" width="5" height="4" fill="#3e7ec4"/><path d="M743 131.5 H747.5 M749.5 131.5 H753.5" stroke="#8a8a8a" stroke-width="1"/><path d="M818 78 h5 l-2.5 3 z" fill="#5f5f5f"/><path d="M815 101 h5 l-2.5 3 z" fill="#5f5f5f"/><path d="M802 125 h5 l-2.5 3 z" fill="#5f5f5f"/><path d="M840 71 H855 V73 H843.5 L849 78.5 L843.5 84 H855 V86 H840 V84.3 L845.8 78.5 L840 72.7 Z" fill="#444444"/><path d="M862 78 h5 l-2.5 3 z" fill="#5f5f5f"/><text x="876" y="78" font-family="Liberation Sans" font-size="8.5" font-weight="700" fill="#3e7ec4">A</text><text x="876.5" y="87" font-family="Liberation Sans" font-size="8.5" font-weight="700" fill="#7c48b0">Z</text><path d="M884 76 H891 L888.5 79 V82.5 H886.5 V79 Z" fill="#6b6b6b"/><path d="M895 78 h5 l-2.5 3 z" fill="#5f5f5f"/><rect x="841.5" y="94.5" width="13" height="15" fill="#fff" stroke="#6b6b6b" stroke-width="1"/><rect x="841" y="94" width="14" height="3" fill="#6b6b6b"/><path d="M848 99 V106" stroke="#3e7ec4" stroke-width="1.8"/><path d="M844.5 103 L848 106.5 L851.5 103" fill="none" stroke="#3e7ec4" stroke-width="1.8"/><path d="M860 101 h5 l-2.5 3 z" fill="#5f5f5f"/><circle cx="885" cy="100.5" r="3.6" fill="none" stroke="#3e7ec4" stroke-width="1.6"/><path d="M882.3 103.3 L877.5 108" stroke="#3e7ec4" stroke-width="2.2" stroke-linecap="round"/><path d="M895 101 h5 l-2.5 3 z" fill="#5f5f5f"/><path d="M849.5 118 L854.3 122.8 L846.5 130.5 L841.8 125.8 Z" fill="#e47c93"/><path d="M843.5 124 L848.3 128.8" stroke="#f3f3f3" stroke-width="1"/><path d="M860 124 h5 l-2.5 3 z" fill="#5f5f5f"/><path d="M1001.5 151.5 L1005.5 147.5 L1009.5 151.5" fill="none" stroke="#6b6b6b" stroke-width="1.6"/><rect x="852.5" y="11.5" width="13" height="9" fill="none" stroke="#ffffff" stroke-width="1"/><path d="M852.5 13.5 H865.5" stroke="#ffffff" stroke-width="1"/><path d="M859 15 V20.5 M856.8 17.2 L859 15 L861.2 17.2" fill="none" stroke="#ffffff" stroke-width="1"/><rect x="900" y="16" width="10" height="1" fill="#ffffff"/><rect x="946.5" y="11.5" width="9" height="9" fill="none" stroke="#ffffff" stroke-width="1"/><path d="M992 11 L1002 21 M1002 11 L992 21" stroke="#ffffff" stroke-width="1"/><path d="M720.8 52.3 L718.6 48.6 A5.1 5.1 0 1 1 726.4 48.6 L724.2 52.3 Z" fill="none" stroke="#ffffff" stroke-width="1.2"/><rect x="720.6" y="52.6" width="3.8" height="2.4" fill="none" stroke="#ffffff" stroke-width="1.2"/><rect x="721" y="56" width="3" height="1" fill="#ffffff"/><circle cx="932" cy="46.6" r="4.6" fill="none" stroke="#ffffff" stroke-width="1.1"/><path d="M925.6 57.5 Q927 52 932.5 51.2" fill="none" stroke="#ffffff" stroke-width="1.1"/><path d="M936.5 51 V58 M933 54.5 H940" stroke="#ffffff" stroke-width="1.1"/><text x="119.3" y="122" font-family="Liberation Sans" font-size="12.5" font-weight="700" fill="#444444">F</text><text x="138.8" y="122" font-family="Liberation Sans" font-size="12.5" font-weight="700" font-style="italic" fill="#444444">K</text><text x="161" y="122" font-family="Liberation Sans" font-size="12.5" font-weight="700" fill="#444444" textLength="8.5" lengthAdjust="spacingAndGlyphs">U</text><rect x="161" y="123" width="9" height="1" fill="#444444"/><text x="271" y="92.6" font-family="Liberation Sans" font-size="13.5" fill="#444444" stroke="#444444" stroke-width="0.35" textLength="9.5" lengthAdjust="spacingAndGlyphs">A</text><text x="294" y="93" font-family="Liberation Sans" font-size="11" fill="#444444" stroke="#444444" stroke-width="0.35" textLength="7.6" lengthAdjust="spacingAndGlyphs">A</text><text x="281.5" y="121.6" font-family="Liberation Sans" font-size="13.5" fill="#444444" stroke="#444444" stroke-width="0.35" textLength="9.5" lengthAdjust="spacingAndGlyphs">A</text><path d="M285 178 h7 l-3.5 3.5 z" fill="#6b6b6b"/><rect x="313" y="176" width="2" height="2" fill="#a0a0a0"/><rect x="313" y="180" width="2" height="2" fill="#a0a0a0"/><rect x="313" y="184" width="2" height="2" fill="#a0a0a0"/><path d="M342.5 176.5 L353.5 185.5 M353.5 176.5 L342.5 185.5" stroke="#bcbcbc" stroke-width="1.5"/><path d="M378 181.5 L382 185.5 L391 176.5" fill="none" stroke="#bcbcbc" stroke-width="1.8"/><text x="414" y="185" font-family="Liberation Serif" font-size="13.5" font-weight="700" font-style="italic" fill="#555">f</text><text x="419.3" y="185.8" font-family="Liberation Serif" font-size="10.5" font-weight="700" font-style="italic" fill="#555">x</text><path d="M1003 178.5 L1006.7 182 L1010.4 178.5" fill="none" stroke="#6b6b6b" stroke-width="1.6"/><path d="M23 208 V220 H11 Z" fill="#b9b9b9"/><path d="M1005.5 214.5 H1013 L1009.25 211 Z" fill="#6b6b6b"/><path d="M1005.5 596 H1013 L1009.25 599.5 Z" fill="#6b6b6b"/><path d="M32 613.5 V621.5 L28 617.5 Z" fill="#c3c3c3"/><path d="M57 613.5 V621.5 L61 617.5 Z" fill="#c3c3c3"/><circle cx="378.8" cy="618" r="7.3" fill="none" stroke="#7a7a7a" stroke-width="1"/><path d="M378.8 614 V622 M374.8 618 H382.8" stroke="#6b6b6b" stroke-width="1.8"/><rect x="612" y="613" width="2" height="2" fill="#a0a0a0"/><rect x="612" y="617" width="2" height="2" fill="#a0a0a0"/><rect x="612" y="621" width="2" height="2" fill="#a0a0a0"/><path d="M638 614.5 V622 L634 618.25 Z" fill="#6b6b6b"/><path d="M992.5 614.5 V622 L996.5 618.25 Z" fill="#6b6b6b"/><circle cx="86" cy="639" r="3" fill="#6b6b6b"/><rect x="89" y="637" width="7" height="3" fill="#6b6b6b"/><path d="M84.5 642 V648.5 H95.5 V640" fill="none" stroke="#6b6b6b" stroke-width="1"/><rect x="86" y="643" width="2" height="1" fill="#6b6b6b"/><rect x="86" y="645" width="2" height="1" fill="#6b6b6b"/><rect x="86" y="647" width="2" height="1" fill="#6b6b6b"/><rect x="89" y="643" width="2" height="1" fill="#6b6b6b"/><rect x="89" y="645" width="2" height="1" fill="#6b6b6b"/><rect x="89" y="647" width="2" height="1" fill="#6b6b6b"/><rect x="92" y="643" width="2" height="1" fill="#6b6b6b"/><rect x="92" y="645" width="2" height="1" fill="#6b6b6b"/><rect x="92" y="647" width="2" height="1" fill="#6b6b6b"/><rect x="732.8" y="636.8" width="11.4" height="11.4" fill="none" stroke="#6b6b6b" stroke-width="1.6"/><path d="M736.6 636 V649 M740.4 636 V649 M732 640.6 H745 M732 644.4 H745" stroke="#6b6b6b" stroke-width="1.3"/><rect x="770.5" y="636.5" width="13" height="12" fill="none" stroke="#6b6b6b" stroke-width="1.2"/><rect x="773.5" y="638.5" width="7" height="8" fill="none" stroke="#6b6b6b" stroke-width="1"/><path d="M775 640.5 H779 M775 642.5 H779 M775 644.5 H779" stroke="#6b6b6b" stroke-width="1"/><rect x="808.5" y="636.5" width="13" height="12" fill="none" stroke="#6b6b6b" stroke-width="1.2"/><path d="M808.5 644.5 H817.5 V636.5 M811.5 636.5 V641.5 M814.5 636.5 V641.5" fill="none" stroke="#6b6b6b" stroke-width="1.2"/><rect x="839" y="642" width="6" height="2" fill="#555"/><rect x="849" y="643" width="100" height="1" fill="#9a9a9a"/><rect x="897" y="637" width="5" height="11" fill="#6b6b6b"/><rect x="952" y="642.5" width="8" height="2" fill="#555"/><rect x="955" y="639.5" width="2" height="8" fill="#555"/></svg>
</body></html>
